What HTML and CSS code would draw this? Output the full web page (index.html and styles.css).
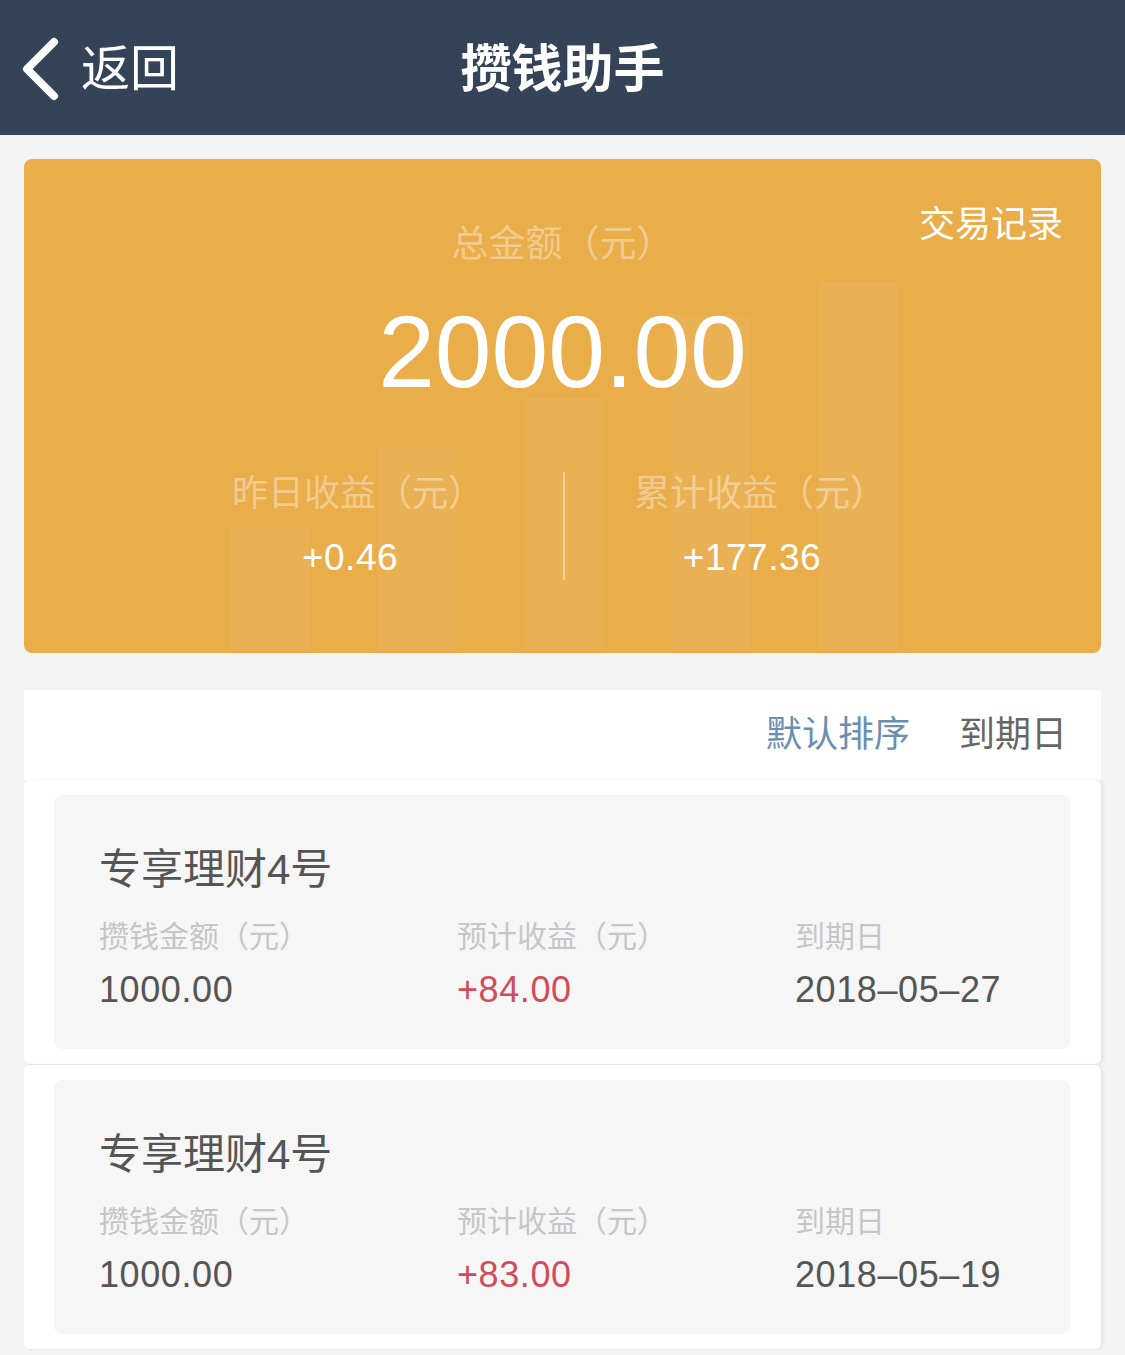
FILE: index.html
```html
<!DOCTYPE html>
<html lang="zh-CN">
<head>
    <meta charset="UTF-8">
    <meta name="viewport" content="width=device-width, initial-scale=1.0">
    <title>攒钱助手</title>
    <link rel="stylesheet" href="styles.css">
</head>
<body>
    <header class="top-bar">
        <a class="back" href="#">
            <svg class="back-icon" width="44" height="70" viewBox="0 0 44 70">
                <polyline points="34,8 7,35 34,62" fill="none" stroke="#fff" stroke-width="8" stroke-linecap="round" stroke-linejoin="round"/>
            </svg>
            <span>返回</span>
        </a>
        <h1 class="title">攒钱助手</h1>
    </header>

    <section class="summary">
        <!-- 背景柱状图 -->
        <div class="bars">
            <div class="bar" style="height: 122px;"></div>
            <div class="bar" style="height: 203px;"></div>
            <div class="bar" style="height: 252px;"></div>
            <div class="bar" style="height: 334px;"></div>
            <div class="bar" style="height: 368px;"></div>
        </div>
        <a class="records" href="#">交易记录</a>
        <p class="total-label">总金额（元）</p>
        <p class="total-value">2000.00</p>
        <div class="stats">
            <div class="stat">
                <p class="stat-label">昨日收益（元）</p>
                <p class="stat-value">+0.46</p>
            </div>
            <div class="stat-divider"></div>
            <div class="stat">
                <p class="stat-label">累计收益（元）</p>
                <p class="stat-value">+177.36</p>
            </div>
        </div>
    </section>

    <div class="sort-bar">
        <span class="sort-item active">默认排序</span>
        <span class="sort-item">到期日</span>
    </div>

    <div class="list">
        <div class="list-item">
            <div class="product">
                <h2 class="product-name">专享理财4号</h2>
                <div class="product-info">
                    <div>
                        <p class="info-label">攒钱金额（元）</p>
                        <p class="info-value">1000.00</p>
                    </div>
                    <div>
                        <p class="info-label">预计收益（元）</p>
                        <p class="info-value red">+84.00</p>
                    </div>
                    <div>
                        <p class="info-label">到期日</p>
                        <p class="info-value">2018–05–27</p>
                    </div>
                </div>
            </div>
        </div>
        <div class="list-item">
            <div class="product">
                <h2 class="product-name">专享理财4号</h2>
                <div class="product-info">
                    <div>
                        <p class="info-label">攒钱金额（元）</p>
                        <p class="info-value">1000.00</p>
                    </div>
                    <div>
                        <p class="info-label">预计收益（元）</p>
                        <p class="info-value red">+83.00</p>
                    </div>
                    <div>
                        <p class="info-label">到期日</p>
                        <p class="info-value">2018–05–19</p>
                    </div>
                </div>
            </div>
        </div>
    </div>
</body>
</html>
```

FILE: styles.css
```css
body {
    margin: 0;
    background-color: #f4f4f4;
    font-family: "Liberation Sans", "Noto Sans CJK SC", sans-serif;
    color: #555;
    overflow: hidden;
}
p, h1, h2 {
    margin: 0;
}
a {
    text-decoration: none;
}

/* --- 顶部导航 --- */
.top-bar {
    position: relative;
    height: 135px;
    background-color: #354359;
    display: flex;
    align-items: center;
    justify-content: center;
}
.back {
    position: absolute;
    left: 20px;
    top: 34px;
    display: flex;
    align-items: center;
    color: #fff;
    font-size: 49px;
    line-height: 70px;
}
.back-icon {
    margin-right: 17px;
}
.title {
    color: #fff;
    font-size: 51px;
    font-weight: bold;
    line-height: 51px;
    margin-top: 4px;
}

/* --- 总金额卡片 --- */
.summary {
    position: relative;
    margin: 24px 24px 0;
    height: 494px;
    padding-top: 67px;
    box-sizing: border-box;
    background-color: #e9ad4a;
    border-radius: 8px;
    overflow: hidden;
    text-align: center;
}
.bars {
    position: absolute;
    left: 207px;
    bottom: 3px;
    display: flex;
    align-items: flex-end;
    gap: 69px;
}
.bar {
    width: 78px;
    background-color: rgba(255, 255, 255, 0.06);
}
.records {
    position: absolute;
    top: 48px;
    right: 38px;
    color: #fff;
    font-size: 36px;
    line-height: 36px;
}
.total-label {
    position: relative;
    font-size: 37px;
    line-height: 37px;
    color: rgba(255, 255, 255, 0.4);
}
.total-value {
    position: relative;
    margin-top: 38px;
    font-size: 102px;
    line-height: 102px;
    color: #fff;
}
.stats {
    position: relative;
    margin-top: 69px;
    padding-left: 113px;
    display: grid;
    grid-template-columns: 426px 2px 374px;
    height: 108px;
}
.stat-divider {
    background-color: rgba(255, 255, 255, 0.4);
}
.stat-label {
    padding: 4px 0 0 16px;
    font-size: 36px;
    line-height: 36px;
    color: rgba(255, 255, 255, 0.4);
}
.stat-value {
    margin-top: 27px;
    font-size: 37px;
    line-height: 37px;
    letter-spacing: 0.5px;
    color: #fff;
}

/* --- 排序 --- */
.sort-bar {
    margin: 37px 24px 0;
    height: 90px;
    background-color: #fff;
    display: flex;
    justify-content: flex-end;
    align-items: center;
    gap: 49px;
    padding-right: 34px;
    font-size: 36px;
    line-height: 36px;
}
.sort-item {
    color: #666;
}
.sort-item.active {
    color: #6b8fb0;
}

/* --- 列表 --- */
.list-item {
    margin: 0 24px 1px;
    padding: 15px 31px 15px 30px;
    background-color: #fff;
    border-radius: 6px;
    box-shadow: 2px 1px 4px rgba(0, 0, 0, 0.08);
}
.product {
    height: 254px;
    box-sizing: border-box;
    padding: 54px 0 0 45px;
    background-color: #f6f6f6;
    border-radius: 8px;
}
.product-name {
    font-size: 42px;
    font-weight: normal;
    line-height: 42px;
    color: #555;
}
.product-info {
    margin-top: 31px;
    display: grid;
    grid-template-columns: 358px 338px 1fr;
}
.info-label {
    font-size: 30px;
    line-height: 30px;
    color: #c6c6c6;
}
.info-value {
    margin-top: 20px;
    font-size: 36px;
    line-height: 36px;
    letter-spacing: 0.6px;
    color: #555;
}
.info-value.red {
    color: #d14d5b;
}
```
